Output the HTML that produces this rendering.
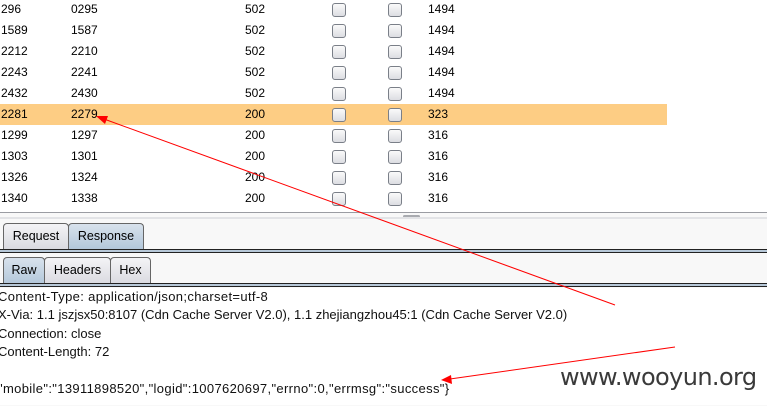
<!DOCTYPE html>
<html><head><style>
body{margin:0;width:767px;height:405px;overflow:hidden;background:#fff;font-family:"Liberation Sans",sans-serif;font-size:12px;color:#000;position:relative}
.row{position:absolute;left:0;width:667px;height:21px}
.row span{position:absolute;top:3px}
.cb{position:absolute;top:4px;width:12px;height:12px;border:1px solid #7a7f88;border-radius:3px;background:linear-gradient(#fafafa,#dcdde2)}
.sep{position:absolute;left:0;width:767px}
.tab{position:absolute;box-sizing:border-box;border:1px solid #666;border-bottom:none;border-radius:4px 4px 0 0;background:linear-gradient(#f4f4f6,#d9dae0);text-align:center;font-size:12.5px;line-height:25px}
.tab.sel{background:linear-gradient(#d8e2ec,#b3c7da)}
.txt{position:absolute;left:-2px;font-size:13px;white-space:pre;color:#111}
</style></head><body>
<div class="row" style="top:-1px"><span style="left:1px">296</span><span style="left:71px">0295</span><span style="left:245px">502</span><div class="cb" style="left:332px"></div><div class="cb" style="left:388px"></div><span style="left:428px">1494</span></div>
<div class="row" style="top:20px"><span style="left:1px">1589</span><span style="left:71px">1587</span><span style="left:245px">502</span><div class="cb" style="left:332px"></div><div class="cb" style="left:388px"></div><span style="left:428px">1494</span></div>
<div class="row" style="top:41px"><span style="left:1px">2212</span><span style="left:71px">2210</span><span style="left:245px">502</span><div class="cb" style="left:332px"></div><div class="cb" style="left:388px"></div><span style="left:428px">1494</span></div>
<div class="row" style="top:62px"><span style="left:1px">2243</span><span style="left:71px">2241</span><span style="left:245px">502</span><div class="cb" style="left:332px"></div><div class="cb" style="left:388px"></div><span style="left:428px">1494</span></div>
<div class="row" style="top:83px"><span style="left:1px">2432</span><span style="left:71px">2430</span><span style="left:245px">502</span><div class="cb" style="left:332px"></div><div class="cb" style="left:388px"></div><span style="left:428px">1494</span></div>
<div class="row" style="top:104px;background:#fdcd84"><span style="left:1px">2281</span><span style="left:71px">2279</span><span style="left:245px">200</span><div class="cb" style="left:332px"></div><div class="cb" style="left:388px"></div><span style="left:428px">323</span></div>
<div class="row" style="top:125px"><span style="left:1px">1299</span><span style="left:71px">1297</span><span style="left:245px">200</span><div class="cb" style="left:332px"></div><div class="cb" style="left:388px"></div><span style="left:428px">316</span></div>
<div class="row" style="top:146px"><span style="left:1px">1303</span><span style="left:71px">1301</span><span style="left:245px">200</span><div class="cb" style="left:332px"></div><div class="cb" style="left:388px"></div><span style="left:428px">316</span></div>
<div class="row" style="top:167px"><span style="left:1px">1326</span><span style="left:71px">1324</span><span style="left:245px">200</span><div class="cb" style="left:332px"></div><div class="cb" style="left:388px"></div><span style="left:428px">316</span></div>
<div class="row" style="top:188px"><span style="left:1px">1340</span><span style="left:71px">1338</span><span style="left:245px">200</span><div class="cb" style="left:332px"></div><div class="cb" style="left:388px"></div><span style="left:428px">316</span></div>
<div class="sep" style="top:212px;height:193px;background:#f8f8f8;border-top:1px solid #9a9ca2"></div>
<div style="position:absolute;left:403px;top:215px;width:17px;height:3px;background:#a9abb0;border-radius:2px"></div>
<div class="sep" style="top:217px;height:2px;background:#e2e3e6"></div>
<div class="tab" style="left:3px;top:223px;width:66px;height:26px">Request</div>
<div class="tab sel" style="left:68px;top:223px;width:76px;height:26px">Response</div>
<div class="sep" style="top:249px;height:2px;background:#b7c8d8;border-top:1px solid #222;border-bottom:1px solid #222"></div>
<div class="tab sel" style="left:3px;top:257px;width:42px;height:27px">Raw</div>
<div class="tab" style="left:44px;top:257px;width:67px;height:27px">Headers</div>
<div class="tab" style="left:110px;top:257px;width:41px;height:27px">Hex</div>
<div class="sep" style="top:283px;height:2px;background:#b7c8d8;border-top:1px solid #222;border-bottom:1px solid #222"></div>
<div class="sep" style="top:288px;height:117px;background:#fff"></div>
<div class="txt" style="top:289px;letter-spacing:0.35px">Content-Type: application/json;charset=utf-8</div>
<div class="txt" style="top:307px">X-Via: 1.1 jszjsx50:8107 (Cdn Cache Server V2.0), 1.1 zhejiangzhou45:1 (Cdn Cache Server V2.0)</div>
<div class="txt" style="top:326px">Connection: close</div>
<div class="txt" style="top:344px">Content-Length: 72</div>
<div class="txt" style="top:381px;letter-spacing:0.35px">"mobile":"13911898520","logid":1007620697,"errno":0,"errmsg":"success"}</div>
<div style="position:absolute;left:560px;top:363px;font-size:24px;color:#3a3a3a;font-family:'DejaVu Sans',sans-serif;letter-spacing:-0.6px">www.wooyun.org</div>
<svg style="position:absolute;left:0;top:0" width="767" height="405">
<line x1="615" y1="305" x2="104" y2="119" stroke="red" stroke-width="1"/>
<polygon points="96,116 108,116 105,124" fill="red"/>
<line x1="675" y1="347" x2="450" y2="379" stroke="red" stroke-width="1"/>
<polygon points="441,380 451,375 452,384" fill="red"/>
</svg>
</body></html>
